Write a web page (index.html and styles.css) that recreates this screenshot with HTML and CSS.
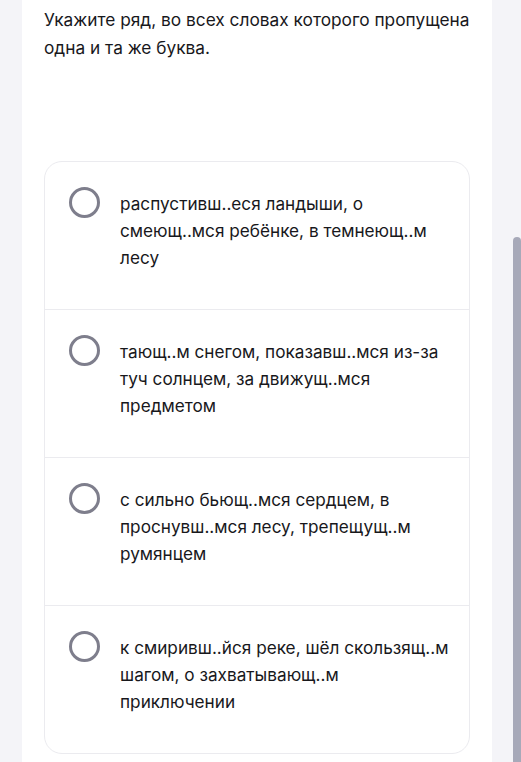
FILE: index.html
```html
<!DOCTYPE html>
<html lang="ru">
<head>
<meta charset="utf-8">
<title>Вопрос</title>
<link rel="stylesheet" href="styles.css">
</head>
<body>
<div class="page">
  <div class="card">
    <p class="question">Укажите ряд, во всех словах которого пропущена одна и та же буква.</p>
    <div class="options">
      <div class="option"><span class="radio"></span><span class="label">распустивш..еся ландыши, о смеющ..мся ребёнке, в темнеющ..м лесу</span></div>
      <div class="option"><span class="radio"></span><span class="label">тающ..м снегом, показавш..мся из-за туч солнцем, за движущ..мся предметом</span></div>
      <div class="option"><span class="radio"></span><span class="label">с сильно бьющ..мся сердцем, в проснувш..мся лесу, трепещущ..м румянцем</span></div>
      <div class="option"><span class="radio"></span><span class="label">к смиривш..йся реке, шёл скользящ..м шагом, о захватывающ..м приключении</span></div>
    </div>
  </div>
</div>
<div class="scroll-thumb"></div>
</body>
</html>
```

FILE: styles.css
```css
html, body {
  margin: 0;
  padding: 0;
}
body {
  width: 521px;
  height: 762px;
  overflow: hidden;
  background: #f4f4f8;
  font-family: Inter, "Noto Sans", "Liberation Sans", sans-serif;
  color: #18181c;
  position: relative;
}
.page {
  padding-right: 8px;
}
.card {
  margin: 0 21px 0 22px;
  background: #ffffff;
  padding: 6px 22px 40px 22px;
  min-height: 800px;
}
.question {
  margin: 0 -8px 0 0;
  font-size: 17.3px;
  line-height: 28px;
}
.options {
  margin-top: 99px;
  border: 1px solid #ebebef;
  border-radius: 18px;
}
.option {
  display: flex;
  align-items: flex-start;
  gap: 20px;
  padding: 28px 12px 38px 24px;
  border-bottom: 1px solid #ebebef;
}
.option:last-child {
  border-bottom: none;
}
.radio {
  flex: none;
  width: 25px;
  height: 25px;
  border: 3px solid #7e7e8c;
  border-radius: 50%;
  margin-top: -3px;
}
.label {
  font-size: 17.2px;
  line-height: 27px;
}
.scroll-thumb {
  position: absolute;
  right: 0;
  top: 237px;
  width: 8px;
  height: 525px;
  background: #a7a9b9;
  border-radius: 4px 4px 0 0;
}
```
